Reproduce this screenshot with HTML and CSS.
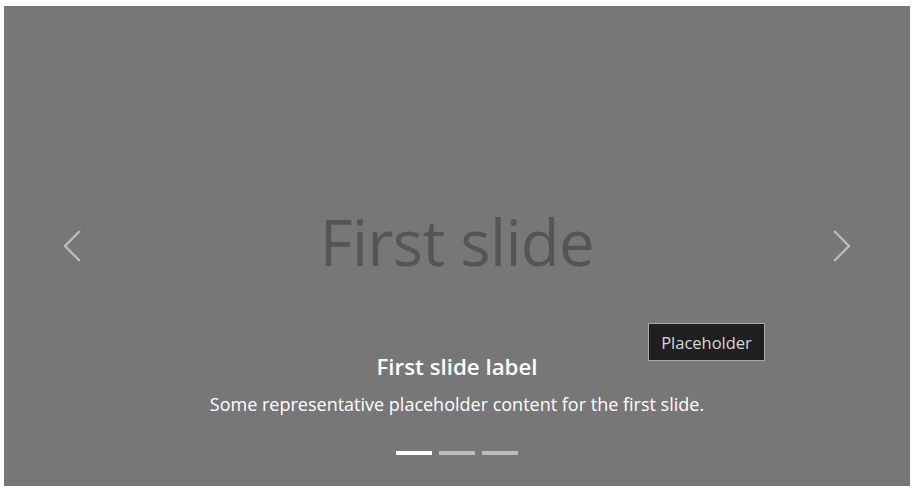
FILE: index.html
```html
<!DOCTYPE html>
<html lang="en">
<head>
<meta charset="utf-8">
<title>Carousel</title>
<link rel="stylesheet" href="styles.css">
</head>
<body>
<div class="page">
  <div class="carousel">
    <div class="slide-bg">
      <span class="slide-text">First slide</span>
    </div>
    <div class="controls">
      <button class="control" aria-label="Previous">
        <svg class="control-icon" viewBox="0 0 16 16" width="38" height="38"><path fill="#fff" d="M11.354 1.646a.5.5 0 0 1 0 .708L5.707 8l5.647 5.646a.5.5 0 0 1-.708.708l-6-6a.5.5 0 0 1 0-.708l6-6a.5.5 0 0 1 .708 0z"/></svg>
      </button>
      <button class="control" aria-label="Next">
        <svg class="control-icon" viewBox="0 0 16 16" width="38" height="38"><path fill="#fff" d="M4.646 1.646a.5.5 0 0 1 .708 0l6 6a.5.5 0 0 1 0 .708l-6 6a.5.5 0 0 1-.708-.708L10.293 8 4.646 2.354a.5.5 0 0 1 0-.708z"/></svg>
      </button>
    </div>
    <div class="caption">
      <h5 class="caption-title">First slide label</h5>
      <p class="caption-text">Some representative placeholder content for the first slide.</p>
    </div>
    <div class="indicators">
      <button class="indicator active" aria-label="Slide 1"></button>
      <button class="indicator" aria-label="Slide 2"></button>
      <button class="indicator" aria-label="Slide 3"></button>
    </div>
    <div class="tooltip">Placeholder</div>
  </div>
</div>
</body>
</html>
```

FILE: styles.css
```css
html, body {
  margin: 0;
  padding: 0;
  background: #fff;
}

body {
  font-family: "Open Sans", "Noto Sans", "DejaVu Sans", sans-serif;
}

.page {
  padding: 6px 8px 7px 4px;
}

.carousel {
  position: relative;
  display: grid;
  grid-template-columns: 1fr;
  grid-template-rows: 480px;
  background: #777;
  overflow: hidden;
}

.carousel > * {
  grid-area: 1 / 1;
}

.slide-bg {
  display: flex;
  align-items: center;
  justify-content: center;
}

.slide-text {
  color: #555;
  font-size: 63.5px;
  letter-spacing: -0.6px;
  line-height: 1;
  margin-top: -8px;
}

.controls {
  display: flex;
  justify-content: space-between;
}

.control {
  width: 15%;
  display: flex;
  align-items: center;
  justify-content: center;
  background: none;
  border: 0;
  padding: 0;
  opacity: 0.5;
  cursor: pointer;
}

.control-icon {
  display: block;
  width: 38px;
  height: 38px;
}

.caption {
  align-self: end;
  margin: 0 15% 24px;
  padding: 24px 0;
  text-align: center;
  color: #fff;
}

.caption-title {
  margin: 0 0 9px;
  font-size: 22.3px;
  font-weight: 600;
  line-height: 29px;
}

.caption-text {
  margin: 0 0 19px;
  font-size: 18px;
  line-height: 29px;
}

.indicators {
  align-self: end;
  justify-self: center;
  display: flex;
  gap: 7px;
  margin-bottom: 31px;
}

.indicator {
  width: 36px;
  height: 4px;
  padding: 0;
  border: 0;
  background: #fff;
  opacity: 0.5;
}

.indicator.active {
  opacity: 1;
}

.tooltip {
  position: absolute;
  left: 644px;
  top: 317px;
  width: 117px;
  height: 38px;
  box-sizing: border-box;
  display: flex;
  align-items: center;
  justify-content: center;
  background: #1f1f1f;
  border: 1px solid #a9a9a9;
  color: #d8d8d8;
  font-size: 16.5px;
}
```
